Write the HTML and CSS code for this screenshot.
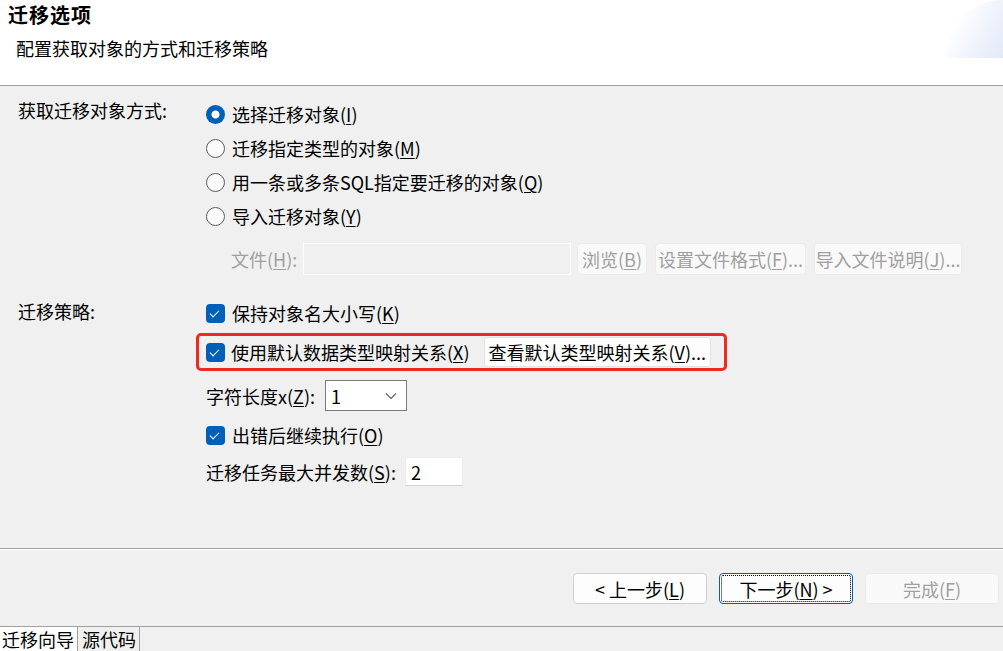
FILE: index.html
```html
<!DOCTYPE html>
<html lang="zh-CN">
<head>
<meta charset="utf-8">
<title>迁移选项</title>
<link rel="stylesheet" href="styles.css">
</head>
<body>
<div class="window">
  <header class="head">
    <div class="title">迁移选项</div>
    <div class="subtitle">配置获取对象的方式和迁移策略</div>
    <div class="swoosh"></div>
  </header>

  <main class="body">
    <section class="group g1">
      <div class="glabel">获取迁移对象方式:</div>
      <div class="opts">
        <div class="row"><span class="radio on"></span><span>选择迁移对象(<u>I</u>)</span></div>
        <div class="row"><span class="radio"></span><span>迁移指定类型的对象(<u>M</u>)</span></div>
        <div class="row"><span class="radio"></span><span>用一条或多条SQL指定要迁移的对象(<u>Q</u>)</span></div>
        <div class="row"><span class="radio"></span><span>导入迁移对象(<u>Y</u>)</span></div>
        <div class="filerow">
          <span class="flabel">文件(<u>H</u>):</span>
          <span class="finput"></span>
          <span class="dbtn b1">浏览(<u>B</u>)</span>
          <span class="dbtn b2">设置文件格式(<u>F</u>)...</span>
          <span class="dbtn b3">导入文件说明(<u>J</u>)...</span>
        </div>
      </div>
    </section>

    <section class="group g2">
      <div class="glabel">迁移策略:</div>
      <div class="opts">
        <div class="row"><span class="check"></span><span>保持对象名大小写(<u>K</u>)</span></div>
        <div class="redbox">
          <span class="check"></span><span class="ctext">使用默认数据类型映射关系(<u>X</u>)</span>
          <span class="wbtn">查看默认类型映射关系(<u>V</u>)...</span>
        </div>
        <div class="selrow">
          <span>字符长度x(<u>Z</u>):</span>
          <span class="select"><span class="sval">1</span>
            <svg class="chev" width="12" height="8" viewBox="0 0 12 8"><path d="M1 1.5 L6 6.5 L11 1.5" fill="none" stroke="#606060" stroke-width="1.1"/></svg>
          </span>
        </div>
        <div class="row r-err"><span class="check"></span><span>出错后继续执行(<u>O</u>)</span></div>
        <div class="numrow">
          <span>迁移任务最大并发数(<u>S</u>):</span>
          <span class="num">2</span>
        </div>
      </div>
    </section>
  </main>

  <div class="footer">
    <span class="btn">&lt; 上一步(<u>L</u>)</span>
    <span class="btn primary">下一步(<u>N</u>) &gt;</span>
    <span class="btn disabled">完成(<u>F</u>)</span>
  </div>

  <div class="tabs">
    <span class="tab active">迁移向导</span>
    <span class="tab">源代码</span>
  </div>
</div>
</body>
</html>
```

FILE: styles.css
```css
* { box-sizing: border-box; }
html, body { margin: 0; padding: 0; }
body {
  font-family: "Noto Sans CJK SC", "Noto Sans", sans-serif;
  font-size: 18px;
  line-height: 24px;
  color: #000;
  background: #f0f0f0;
}
u { text-decoration: underline; text-underline-offset: 2px; text-decoration-thickness: 1px; }

.window {
  width: 1003px;
  height: 651px;
  display: flex;
  flex-direction: column;
  overflow: hidden;
}

/* header */
.head {
  position: relative;
  height: 86px;
  background: #fff;
  border-bottom: 1px solid #a0a0a0;
  padding: 2px 0 0 8px;
  flex: none;
}
.title {
  font-size: 20px;
  font-weight: 700;
  line-height: 26px;
  letter-spacing: 1px;
}
.subtitle {
  font-size: 18px;
  line-height: 26px;
  margin-top: 7px;
  padding-left: 8px;
}
.swoosh {
  position: absolute;
  right: 0;
  top: 0;
  width: 58px;
  height: 58px;
  border-top-left-radius: 100% 100%;
  background: linear-gradient(120deg, rgba(255,255,255,0) 25%, #eef2fb 65%, #e2e9f8 100%);
}

/* body */
.body {
  flex: none;
  height: 463px;
  border-bottom: 1px solid #a0a0a0;
  box-shadow: 0 1px 0 #fff;
  padding-top: 11px;
}
.group {
  display: grid;
  grid-template-columns: 188px 1fr;
  padding-left: 18px;
}
.glabel { line-height: 24px; padding-top: 1px; }
.g2 { margin-top: 21px; }
.g2 .glabel { padding-top: 3px; }

.row {
  height: 34px;
  display: flex;
  align-items: center;
  gap: 7px;
}
.radio {
  width: 19px;
  height: 19px;
  border-radius: 50%;
  border: 1px solid #5c5c5c;
  background: #fbfbfb;
  flex: none;
}
.radio.on {
  border: none;
  background: radial-gradient(circle, #fff 0 3.6px, #005fb8 4.4px);
}
.check {
  width: 19px;
  height: 19px;
  border-radius: 4px;
  background: #005fb8;
  flex: none;
  position: relative;
}
.check::after {
  content: "";
  position: absolute;
  left: 6px;
  top: 4px;
  width: 4px;
  height: 8px;
  border-right: 1.3px solid #fff;
  border-bottom: 1.3px solid #fff;
  transform: rotate(45deg);
}

.filerow {
  margin-top: 10px;
  height: 32px;
  display: flex;
  align-items: center;
  color: #a0a0a0;
}
.flabel { margin-left: 25px; width: 72px; white-space: nowrap; }
.finput {
  width: 268px;
  height: 32px;
  border: 1px solid #fdfdfd;
  background: #f0f0f0;
}
.dbtn {
  height: 32px;
  display: flex;
  align-items: center;
  justify-content: center;
  background: #f9f9f9;
  border: 1px solid #ebebeb;
  border-radius: 4px;
  padding: 0 2px;
  white-space: nowrap;
}
.b1 { margin-left: 6px; width: 70px; }
.b2 { margin-left: 8px; width: 151px; }
.b3 { margin-left: 8px; width: 148px; }

.redbox {
  margin-top: 3px;
  margin-left: -10px;
  width: 531px;
  height: 38px;
  border: 3px solid #ec2a23;
  border-radius: 5px;
  display: flex;
  align-items: center;
  padding-left: 7px;
}
.ctext { margin-left: 6px; white-space: nowrap; }
.wbtn {
  margin-left: 14px;
  height: 30px;
  padding: 0 4px;
  display: flex;
  align-items: center;
  background: #fdfdfd;
  border: 1px solid #e3e3e3;
  border-radius: 3px;
  white-space: nowrap;
}

.selrow {
  margin-top: 9px;
  height: 31px;
  display: flex;
  align-items: center;
  gap: 10px;
}
.select {
  width: 82px;
  height: 31px;
  background: #fff;
  border: 1px solid #7a7a7a;
  display: flex;
  align-items: center;
  justify-content: space-between;
  padding: 0 9px 0 5px;
}
.r-err { margin-top: 7px; }
.numrow {
  margin-top: 5px;
  height: 29px;
  display: flex;
  align-items: center;
  gap: 9px;
}
.num {
  width: 58px;
  height: 29px;
  background: #fff;
  border: 1px solid #ececec;
  border-bottom-color: #d0d0d0;
  padding-left: 5px;
  display: flex;
  align-items: center;
}

/* footer */
.footer {
  flex: none;
  height: 77px;
  margin-top: 1px;
  display: flex;
  justify-content: flex-end;
  gap: 12px;
  padding: 23px 4px 0 0;
  border-bottom: 1px solid #a0a0a0;
}
.btn {
  width: 134px;
  height: 31px;
  display: flex;
  align-items: center;
  justify-content: center;
  background: #fdfdfd;
  border: 1px solid #d0d0d0;
  border-radius: 4px;
}
.btn.primary {
  border-color: #005fb8;
  outline: 1px dotted #000;
  outline-offset: -3px;
}
.btn.disabled {
  color: #a0a0a0;
  background: #f9f9f9;
  border-color: #ebebeb;
}

/* tabs */
.tabs {
  flex: 1;
  display: flex;
  align-items: stretch;
}
.tab {
  font-size: 18px;
  line-height: 24px;
  padding: 0 3px 0 2px;
}
.tab.active { background: #fff; width: 77px; }
.tab:not(.active) {
  border-left: 1px solid #a0a0a0;
  border-right: 1px solid #a0a0a0;
  width: 63px;
  padding-left: 4px;
}
```
